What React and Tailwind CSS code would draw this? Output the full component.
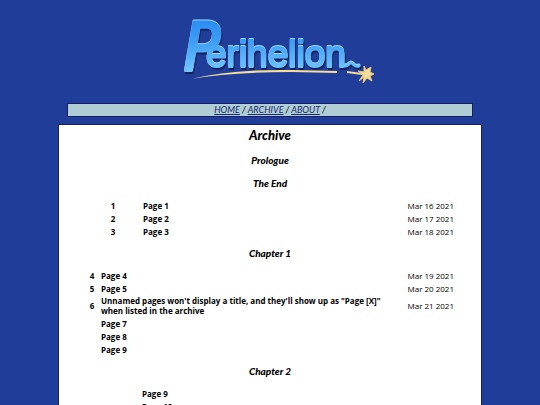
import React from 'react'

const navLinks = ['HOME', 'ARCHIVE', 'ABOUT']

const chapters = [
  {
    title: 'The End',
    numberCol: 'w-[56px]',
    pages: [
      { number: 1, title: 'Page 1', date: 'Mar 16 2021' },
      { number: 2, title: 'Page 2', date: 'Mar 17 2021' },
      { number: 3, title: 'Page 3', date: 'Mar 18 2021' },
    ],
  },
  {
    title: 'Chapter 1',
    numberCol: 'w-[14px]',
    pages: [
      { number: 4, title: 'Page 4', date: 'Mar 19 2021' },
      { number: 5, title: 'Page 5', date: 'Mar 20 2021' },
      {
        number: 6,
        title: 'Unnamed pages won\'t display a title, and they\'ll show up as "Page [X]" when listed in the archive',
        date: 'Mar 21 2021',
      },
      { title: 'Page 7' },
      { title: 'Page 8' },
      { title: 'Page 9' },
    ],
  },
  {
    title: 'Chapter 2',
    numberCol: 'w-[55px]',
    pages: [{ title: 'Page 9' }, { title: 'Page 10' }],
  },
]

function Logo() {
  return (
    <svg viewBox="0 0 196 72" className="h-[72px] w-[196px] overflow-visible" role="img" aria-label="Perihelion">
      <defs>
        <linearGradient id="ice" gradientUnits="userSpaceOnUse" x1="0" y1="6" x2="0" y2="60">
          <stop offset="0" stopColor="#2a8df2" />
          <stop offset="0.4" stopColor="#3f9ff5" />
          <stop offset="1" stopColor="#7accff" />
        </linearGradient>
      </defs>
      {/* comet trail */}
      <path d="M9 64 Q50 54 110 55 L155 56 L155 58 L110 57 Q50 57 9 64Z" fill="#f5dc98" />
      <path d="M165 56 L180 58 L180 60 L165 58Z" fill="#f5dc98" />
      <g
        className="[filter:drop-shadow(0px_-1px_0px_#9cdcff)_drop-shadow(1px_2px_0px_#14225f)]"
        fill="url(#ice)"
        stroke="url(#ice)"
        strokeLinejoin="round"
      >
        <text x="2" y="55" fontFamily="'DejaVu Sans Condensed', 'DejaVu Sans', sans-serif" fontSize="66" fontStyle="italic" strokeWidth="3">P</text>
        <text x="24" y="52" fontFamily="'Liberation Sans', sans-serif" fontSize="37" strokeWidth="2">erihelion</text>
        <path d="M159 47 Q161 53 166 50 Q169 46 172 50 Q174 52 177 51" fill="none" strokeWidth="3" strokeLinecap="round" />
      </g>
      <path
        d="M182 51 L184 55 L189 52 L188 57 L192 59 L188 61 L190 66 L185 63 L181 68 L182 62 L177 66 L181 60 L176 56 L182 57Z"
        fill="#f5dc98"
        stroke="#e5c67c"
        strokeWidth="1"
      />
    </svg>
  )
}

function ChapterTable({ chapter }) {
  return (
    <table className="mt-2 w-full table-fixed border-collapse text-[8px] leading-[10px]" aria-label={chapter.title}>
      <colgroup>
        <col className={chapter.numberCol} />
        <col />
        <col className="w-[68px]" />
      </colgroup>
      <tbody>
        {chapter.pages.map((page) => (
          <tr key={page.title} className="h-[13px]">
            <td className="p-0 text-center font-bold">{page.number}</td>
            <td className="py-px pr-0 pl-[2px] font-bold">
              <a href="#">{page.title}</a>
            </td>
            <td className="py-0 pr-px pl-0 text-right whitespace-nowrap">{page.date}</td>
          </tr>
        ))}
      </tbody>
    </table>
  )
}

function ChapterHeading({ children }) {
  return (
    <h2 className="mt-[7px] text-center font-[Lato,sans-serif] text-[10px] leading-4 font-black italic">
      {children}
    </h2>
  )
}

export default function App() {
  return (
    <div className="flex min-h-screen flex-col bg-[#203d9a] px-[58px] font-['Open_Sans',sans-serif] text-black">
      <header className="flex justify-center pt-[15px] pl-[20px]">
        <Logo />
      </header>

      <nav className="mx-[9px] mt-4 border border-[#14205f] bg-[#b0cdd5] text-center font-[Lato,sans-serif] text-[9px] leading-3 italic">
        {navLinks.map((label) => (
          <React.Fragment key={label}>
            <a href="#" className="text-[#1b2a70] underline">{label}</a>
            {' / '}
          </React.Fragment>
        ))}
      </nav>

      <main className="mt-[7px] flex-1 border border-[#14205f] bg-white px-[26px] pb-4">
        <h1 className="text-center font-[Lato,sans-serif] text-[13px] leading-5 font-black italic">
          Archive
        </h1>
        <ChapterHeading>Prologue</ChapterHeading>
        {chapters.map((chapter) => (
          <section key={chapter.title}>
            <ChapterHeading>{chapter.title}</ChapterHeading>
            <ChapterTable chapter={chapter} />
          </section>
        ))}
      </main>
    </div>
  )
}
